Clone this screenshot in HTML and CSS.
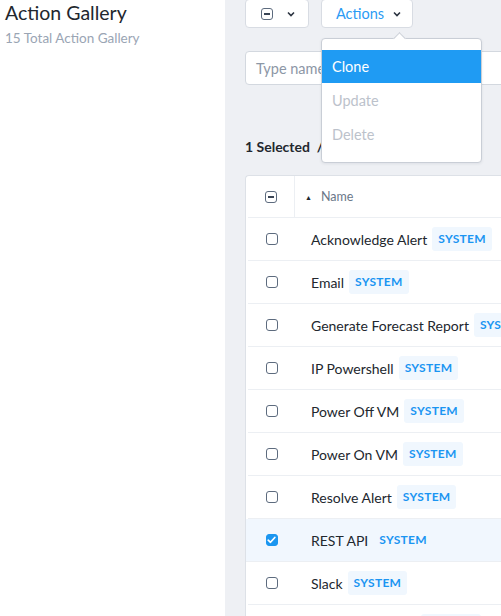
FILE: index.html
```html
<!DOCTYPE html>
<html>
<head>
<meta charset="utf-8">
<link rel="stylesheet" href="styles.css">
</head>
<body>
<div class="sidebar">
  <h1 class="title">Action Gallery</h1>
  <div class="subtitle">15 Total Action Gallery</div>
</div>
<div class="main">
  <div class="toolbar">
    <button class="btn btn-select">
      <span class="cb cb-minus"></span>
      <svg class="chev" width="8" height="6" viewBox="0 0 8 6"><path d="M1 1.5 L4 4.5 L7 1.5" fill="none" stroke="#2b3340" stroke-width="1.6"/></svg>
    </button>
    <div class="actions-wrap">
      <button class="btn btn-actions">
        <span>Actions</span>
        <svg class="chev" width="8" height="6" viewBox="0 0 8 6"><path d="M1 1.5 L4 4.5 L7 1.5" fill="none" stroke="#2b3340" stroke-width="1.6"/></svg>
      </button>
      <div class="menu">
        <div class="menu-item active">Clone</div>
        <div class="menu-item disabled">Update</div>
        <div class="menu-item disabled">Delete</div>
      </div>
    </div>
  </div>
  <div class="search"><span class="placeholder">Type name</span></div>
  <div class="selected">1 Selected&nbsp; /</div>
  <div class="table">
    <div class="row head">
      <div class="cell-cb"><span class="cb cb-minus"></span></div>
      <div class="cell-name"><span class="sort">&#9650;</span>Name</div>
    </div>
    <div class="row"><div class="cell-cb"><span class="cb"></span></div><div class="cell-name">Acknowledge Alert<span class="badge">SYSTEM</span></div></div>
    <div class="row"><div class="cell-cb"><span class="cb"></span></div><div class="cell-name">Email<span class="badge">SYSTEM</span></div></div>
    <div class="row"><div class="cell-cb"><span class="cb"></span></div><div class="cell-name">Generate Forecast Report<span class="badge">SYSTEM</span></div></div>
    <div class="row"><div class="cell-cb"><span class="cb"></span></div><div class="cell-name">IP Powershell<span class="badge">SYSTEM</span></div></div>
    <div class="row"><div class="cell-cb"><span class="cb"></span></div><div class="cell-name">Power Off VM<span class="badge">SYSTEM</span></div></div>
    <div class="row"><div class="cell-cb"><span class="cb"></span></div><div class="cell-name">Power On VM<span class="badge">SYSTEM</span></div></div>
    <div class="row"><div class="cell-cb"><span class="cb"></span></div><div class="cell-name">Resolve Alert<span class="badge">SYSTEM</span></div></div>
    <div class="row sel"><div class="cell-cb"><span class="cb cb-checked"><svg width="9" height="8" viewBox="0 0 9 8"><path d="M1.2 4.2 L3.5 6.3 L7.8 1.5" fill="none" stroke="#fff" stroke-width="1.7" stroke-linecap="round" stroke-linejoin="round"/></svg></span></div><div class="cell-name">REST API<span class="badge">SYSTEM</span></div></div>
    <div class="row"><div class="cell-cb"><span class="cb"></span></div><div class="cell-name">Slack<span class="badge">SYSTEM</span></div></div>
    <div class="row"><div class="cell-cb"><span class="cb"></span></div><div class="cell-name">Trigger Webhook<span class="badge">SYSTEM</span></div></div>
  </div>
</div>
</body>
</html>
```

FILE: styles.css
```css
* { box-sizing: border-box; }
html, body { margin: 0; height: 100%; overflow: hidden; }
body {
  display: flex;
  font-family: Lato, "Noto Sans", sans-serif;
  color: #22272e;
  background: #eef0f4;
}
.sidebar {
  width: 225px;
  flex: none;
  background: #fff;
  padding: 1px 5px;
}
.title {
  margin: 0;
  font-size: 19.5px;
  font-weight: 400;
  line-height: 24px;
  color: #22272e;
}
.subtitle {
  margin-top: 4px;
  font-size: 13.5px;
  color: #9aa5b4;
  line-height: 18px;
}
.main {
  flex: 1;
  min-width: 0;
  padding-left: 20px;
  overflow: hidden;
}
.toolbar {
  display: flex;
  gap: 12px;
  margin-top: -1px;
}
.btn {
  display: flex;
  align-items: center;
  height: 29px;
  background: #fff;
  border: 1px solid #d8dce3;
  border-radius: 4px;
  font-family: inherit;
  padding: 0;
  cursor: pointer;
}
.btn-select {
  width: 64px;
  padding-left: 15px;
  gap: 14px;
}
.actions-wrap { position: relative; }
.btn-actions {
  width: 92px;
  padding-left: 14px;
  gap: 9px;
  font-size: 14.5px;
  color: #2b9bf4;
}
.cb {
  display: inline-flex;
  align-items: center;
  justify-content: center;
  width: 12px;
  height: 12px;
  border: 1.5px solid #5d6b7e;
  border-radius: 3px;
  background: #fff;
}
.cb-minus::after {
  content: "";
  width: 6px;
  height: 2px;
  background: #3a4555;
}
.cb-checked {
  background: #1b96f0;
  border-color: #1b96f0;
}
.menu {
  position: absolute;
  top: 39px;
  left: 0;
  width: 161px;
  background: #fff;
  border: 1px solid #c9ced6;
  border-radius: 4px;
  padding: 11px 0 10px;
  box-shadow: 0 1px 3px rgba(30, 40, 60, 0.08);
  z-index: 5;
}
.menu::before {
  content: "";
  position: absolute;
  top: -5px;
  left: 73px;
  width: 8px;
  height: 8px;
  background: #fff;
  border-left: 1px solid #c9ced6;
  border-top: 1px solid #c9ced6;
  transform: rotate(45deg);
}
.menu-item {
  height: 33px;
  line-height: 33px;
  padding-left: 10px;
  font-size: 14.5px;
  margin-bottom: 1px;
}
.menu-item.active {
  background: #1f9bf3;
  color: #fff;
}
.menu-item.disabled {
  color: #bcc2cb;
}
.search {
  margin-top: 23px;
  width: 300px;
  height: 34px;
  background: #fff;
  border: 1px solid #d3d8df;
  border-radius: 4px;
  padding-left: 10px;
  display: flex;
  align-items: center;
}
.placeholder {
  font-size: 14.5px;
  color: #8d97a6;
}
.selected {
  margin-top: 53px;
  font-size: 14px;
  font-weight: 700;
  color: #22272e;
  line-height: 18px;
}
.table {
  margin-top: 19px;
  width: 300px;
  background: #fff;
  border: 1px solid #dde1e7;
  border-right: none;
  border-radius: 4px 0 0 0;
  padding-left: 2px;
}
.row {
  display: flex;
  align-items: stretch;
  height: 43px;
  border-bottom: 1px solid #eceff3;
}
.row.head { height: 42px; }
.row.sel { background: #f1f7fe; margin-left: -2px; padding-left: 2px; }
.cell-cb {
  width: 47px;
  flex: none;
  display: flex;
  align-items: center;
  justify-content: center;
}
.head .cell-cb { border-right: 1px solid #eceff3; }
.cell-name {
  display: flex;
  align-items: center;
  padding-left: 16px;
  font-size: 14px;
  white-space: nowrap;
}
.head .cell-name {
  padding-left: 10px;
  font-size: 12.5px;
  color: #6b7789;
}
.sort {
  font-size: 7px;
  color: #22272e;
  margin-right: 9px;
}
.badge {
  display: inline-block;
  margin-left: 5px;
  padding: 0 6px;
  height: 24px;
  line-height: 24px;
  background: #f0f7fe;
  color: #1b95f2;
  font-size: 12px;
  font-weight: 700;
  letter-spacing: 0.3px;
  border-radius: 3px;
}
.row.sel .badge { background: transparent; }
```
